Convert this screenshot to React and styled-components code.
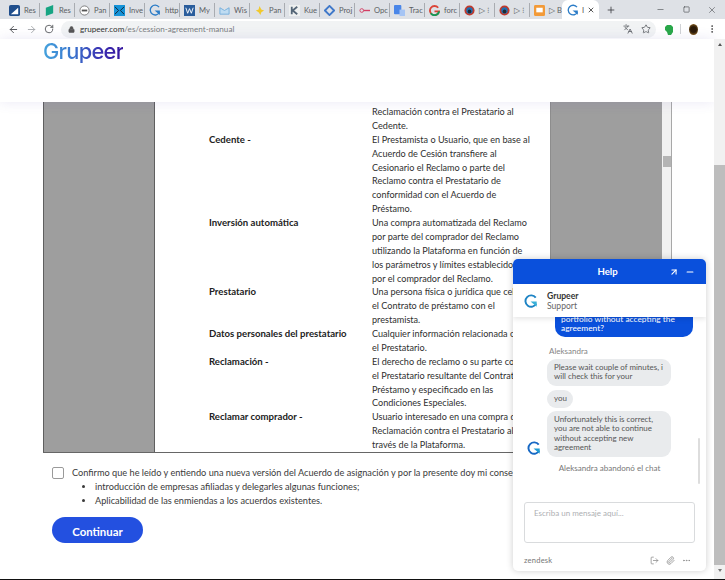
import React from 'react';
import styled, { createGlobalStyle } from 'styled-components';
import { ArrowLeft, ArrowRight, RotateCw, Lock, Star, Plus, X, Minus, Square, EllipsisVertical, Languages, ArrowUpRight, Paperclip, Ellipsis, LogOut } from 'lucide-react';

const Global = createGlobalStyle`
  html, body { margin: 0; padding: 0; }
  body { width: 725px; height: 580px; overflow: hidden; background: #fff; font-family: "Lato", "Open Sans", sans-serif; color: #333; }
  * { box-sizing: border-box; }
`;

const Win = styled.div`
  position: relative; width: 725px; height: 580px; display: flex; flex-direction: column;
  overflow: hidden; border-bottom: 1px solid #111;
`;

/* ---------- browser chrome ---------- */
const TabStrip = styled.div`
  height: 19px; flex: none; display: flex; align-items: stretch; background: #dee1e6; padding-left: 5px;
`;
const Tab = styled.div`
  width: 35px; flex: none; display: flex; align-items: center; gap: 4px; padding-left: 4px;
  border-right: 1px solid ${p => p.$last ? 'transparent' : '#a9acb1'}; margin: 3px 0 2px; overflow: hidden;
  font-size: 7.6px; color: #5c5f63; white-space: nowrap;
`;
const ActiveTab = styled.div`
  width: 37px; flex: none; margin: 0 0 0 -3px; padding: 0 4px 0 5px; display: flex; align-items: center; gap: 3px;
  background: #fff; border-radius: 6px 6px 0 0; font-size: 7.6px; color: #555;
`;
const NewTab = styled.div`
  width: 24px; flex: none; display: flex; align-items: center; justify-content: center; color: #3c4043;
`;
const WinControls = styled.div`
  margin-left: auto; display: flex; align-items: center; color: #3c4043;
`;
const WinBtn = styled.div`
  width: 26px; display: flex; align-items: center; justify-content: center;
`;
const Toolbar = styled.div`
  height: 20px; flex: none; background: #fff; display: flex; align-items: center; padding-left: 4px; color: #5f6368;
`;
const NavBtn = styled.div`
  width: 18px; display: flex; justify-content: center; color: ${p => p.$off ? '#a5a8ac' : '#4a4d51'};
`;
const UrlPill = styled.div`
  width: 595px; height: 17px; margin-left: 3px; flex: none; background: #f1f3f4; border-radius: 9px;
  display: flex; align-items: center; padding: 0 5px 0 7px; font-size: 8.1px; color: #7a7d81; white-space: pre;
`;
const UrlHost = styled.span` color: #333; margin-left: 5px; `;
const UrlEnd = styled.div` margin-left: auto; display: flex; align-items: center; gap: 8px; color: #5f6368; `;
const ToolRight = styled.div`
  flex: 1; display: flex; align-items: center; padding-left: 8px; gap: 7px;
`;
const Divider = styled.div` width: 1px; height: 10px; background: #d0d2d5; `;
const Avatar = styled.div`
  width: 9px; height: 11px; border-radius: 50%; margin-left: 1px;
  background: radial-gradient(circle at 50% 50%, #2a1a08 40%, #b57d27 100%);
`;
const MenuDots = styled(EllipsisVertical)` margin-left: 2px; color: #444; `;

/* ---------- page ---------- */
const Viewport = styled.div`
  flex: 1; min-height: 0; display: flex; align-items: stretch;
`;
const Page = styled.div`
  width: 714px; flex: none; display: flex; flex-direction: column; min-height: 0;
`;
const SiteHeader = styled.header`
  height: 63px; flex: none; background: #fff; padding-left: 43px; overflow: hidden; position: relative; z-index: 2;
  box-shadow: 0 0 12px rgba(90, 80, 180, .13);
`;
const Logo = styled.div`
  display: inline-block; font-family: "Inter", "Lato", sans-serif; font-size: 21.8px; font-weight: 500; letter-spacing: -.7px; line-height: 24px;
  background: linear-gradient(90deg, #45a3dd 0%, #3a78cf 35%, #3a2bb0 75%, #35159e 100%);
  -webkit-background-clip: text; background-clip: text; color: transparent;
`;
const Agreement = styled.div`
  margin-left: 43px; width: 629px; height: 351px; flex: none; display: grid; grid-template-columns: 112px 395px 112px 10px;
  border-bottom: 1px solid #666; overflow: hidden;
`;
const GreyCol = styled.div`
  background: #9e9e9e; border-left: 1px solid ${p => p.$dark ? '#5f5f5f' : '#8d8d8d'}; border-right: 1px solid ${p => p.$end ? 'transparent' : '#5f5f5f'};
`;
const Terms = styled.div`
  padding: 3px 0 0 54px; font-size: 9.1px; line-height: 13.87px; color: #2f2f2f; white-space: nowrap;
`;
const TermRow = styled.div`
  display: grid; grid-template-columns: 163px 1fr;
`;
const Term = styled.div` font-weight: 700; font-size: 9.6px; color: #222; `;
const InnerBar = styled.div`
  background: #f1f1f1; border-right: 1px solid #a8a8a8; padding: 54px 0 0 1px;
`;
const InnerThumb = styled.div` width: 8px; height: 11px; background: #b4b4b4; `;
const Consent = styled.div`
  padding: 13px 0 0 52px; font-size: 9.2px; line-height: 14px; color: #3a3a3a; white-space: nowrap;
`;
const CheckRow = styled.div` display: flex; align-items: center; gap: 8px; height: 14px; `;
const CheckBox = styled.div` width: 12px; height: 12px; border: 1px solid #9a9a9a; border-radius: 2px; background: #fff; `;
const Bullets = styled.ul`
  margin: 0; padding: 0 0 0 43px; 
  li { padding-left: 0; line-height: 14px; }
`;
const Primary = styled.button`
  display: block; margin-top: 9px; width: 91px; height: 26px; border: 0; border-radius: 13px; background: #2350e0;
  color: #fff; font: 700 11.4px "Lato", sans-serif; padding: 2px 0 0;
`;
const PageBar = styled.div`
  flex: 1; background: #f1f1f1; display: flex; flex-direction: column; align-items: center; position: relative; z-index: 3;
  padding-top: 4px;
`;
const ArrowUp = styled.div`
  width: 0; height: 0; border: 2.5px solid transparent; border-top: 0; border-bottom: 3px solid #555;
`;
const ArrowDown = styled.div`
  width: 0; height: 0; border: 2.5px solid transparent; border-bottom: 0; border-top: 3px solid #777;
`;
const PageThumb = styled.div`
  width: 100%; height: 400px; margin: 119px 0 4px; background: #bdbdbd;
`;

/* ---------- chat ---------- */
const Chat = styled.aside`
  position: absolute; left: 513px; top: 259px; width: 193px; height: 312px; background: #fff; border-radius: 5px;
  box-shadow: 0 0 7px rgba(0, 0, 0, .2); display: flex; flex-direction: column; overflow: hidden; z-index: 5;
`;
const ChatHead = styled.div`
  height: 25px; flex: none; background: #0a50dc; color: #fff; display: grid; grid-template-columns: 1fr auto; align-items: center;
  font-size: 9.6px; font-weight: 700; padding: 0 11px 0 0;
`;
const ChatTitle = styled.div` text-align: center; padding-left: 33px; `;
const ChatActions = styled.div` display: flex; align-items: center; gap: 6px; `;
const Agent = styled.div`
  height: 33px; flex: none; display: flex; align-items: center; gap: 9px; padding-left: 11px; background: #fff; position: relative; z-index: 1;
  box-shadow: 0 2px 5px rgba(0, 0, 0, .1);
`;
const AgentText = styled.div` font-size: 8.6px; line-height: 10px; color: #666; `;
const AgentName = styled.div` font-weight: 700; color: #333; `;
const Messages = styled.div`
  height: 185px; flex: none; display: flex; flex-direction: column; justify-content: flex-end; overflow: hidden; position: relative;
  padding: 0 0 28px 34px; font-size: 7.95px; line-height: 9.2px; color: #555; white-space: nowrap;
`;
const Mine = styled.div`
  flex: none; align-self: flex-end; width: 138px; margin-right: 13px; padding: 0 6px 3px 6px; background: #0a50dc; color: #fff;
  border-radius: 0 0 10px 10px; font-size: 8.4px;
`;
const SenderName = styled.div` flex: none; margin: 9px 0 3px 2px; color: #858585; font-size: 8px; line-height: 10px; `;
const Bubble = styled.div`
  flex: none; align-self: flex-start; width: ${p => p.$w}px; padding: 4px 7px 5px; margin-bottom: ${p => p.$gap || 3}px; background: #e9ebed; border-radius: 9px; color: #555;
`;
const AvatarMark = styled.div` position: absolute; left: 14px; bottom: 47px; line-height: 0; `;
const System = styled.div` flex: none; text-align: center; margin: 2px 0 0 -34px; line-height: 12px; color: #777; font-size: 8.05px; `;
const ChatThumb = styled.div`
  position: absolute; right: 6px; bottom: 18px; width: 2px; height: 46px; background: #ddd; border-radius: 1px;
`;
const Composer = styled.div`
  height: 41px; flex: none; margin: 0 11px; padding: 5px 9px; border: 1px solid #d9dbdd; border-radius: 3px; font-size: 8px; line-height: 11px; color: #aeb0b3;
`;
const ChatFoot = styled.div`
  flex: 1; display: flex; align-items: center; justify-content: space-between; padding: 6px 15px 0 11px; font-size: 7.6px; color: #777; letter-spacing: .2px;
`;
const FootIcons = styled.div` display: flex; align-items: center; gap: 7px; color: #8a8a8a; `;

/* ---------- drawings ---------- */
const GMark = ({ size = 14, stroke = 2.2, a = '#1d83c4', b = '#38b0d8' }) => (
  <svg width={size} height={size} viewBox="0 0 16 16" fill="none">
    <path d="M13.4 4.2A6.5 6.5 0 1 0 14 11" stroke={a} strokeWidth={stroke} />
    <path d="M7.5 8.6H14.5V14.5Z" fill={b} />
  </svg>
);

const Fav = ({ kind }) => {
  const s = { width: 11, height: 11, viewBox: '0 0 12 12', style: { flex: 'none' } };
  switch (kind) {
    case 'res1': return <svg {...s}><rect width="12" height="12" rx="2" fill="#1f4e8c" /><path d="M2 10 10 3v7z" fill="#fff" /></svg>;
    case 'res2': return <svg {...s}><path d="M2 3 10 0v9l-8 3z" fill="#17a583" /></svg>;
    case 'pan': return <svg {...s}><circle cx="6" cy="6" r="5" fill="#fff" stroke="#777" /><path d="M3 6h6" stroke="#555" strokeWidth="2" /></svg>;
    case 'inv': return <svg {...s}><rect width="12" height="12" fill="#1593d8" /><path d="M1 2 5 6 1 10M11 2 7 6l4 4" stroke="#123" fill="none" /></svg>;
    case 'g': return <GMark size={12} stroke={1.8} a="#2b7cc7" b="#2b7cc7" />;
    case 'my': return <svg {...s}><rect width="12" height="12" fill="#2a5d9c" /><path d="m2 3 2 6 2-5 2 5 2-6" stroke="#fff" fill="none" /></svg>;
    case 'wis': return <svg {...s}><path d="M1 3 6 6l5-3v7H1z" fill="#bfdcf2" stroke="#74aedb" /></svg>;
    case 'star': return <svg {...s}><path d="M6 1 8 5l3 1-3 2-1 3-2-3-3-2 3-1z" fill="#f1c92c" /></svg>;
    case 'kue': return <svg {...s}><rect width="12" height="12" fill="#eef0f0" /><path d="M3 2v8M9 2 4 6l5 4" stroke="#567" strokeWidth="2" fill="none" /></svg>;
    case 'proj': return <svg {...s}><path d="M6 1 11 6 6 11 1 6z" fill="none" stroke="#3f78c9" strokeWidth="2" /></svg>;
    case 'opc': return <svg {...s}><circle cx="3" cy="6" r="2" fill="none" stroke="#d33d63" /><path d="M5 6h7" stroke="#d33d63" strokeWidth="1.5" /></svg>;
    case 'trac': return <svg {...s}><rect width="8" height="10" rx="1" fill="#4a86e8" /><rect x="6" y="5" width="6" height="7" fill="#a5c4f4" /></svg>;
    case 'goog': return <svg {...s}><path d="M10 3A5 5 0 1 0 11 7H6" fill="none" stroke="#db4437" strokeWidth="2" /><path d="M11 7A5 5 0 0 1 2 9" fill="none" stroke="#0f9d58" strokeWidth="2" /></svg>;
    case 'ball': return <svg {...s}><circle cx="6" cy="6" r="5.5" fill="#c0392b" /><circle cx="6" cy="6" r="3.5" fill="#1f6fb3" /><circle cx="6" cy="7" r="2" fill="#1d2a33" /></svg>;
    case 'msg': return <svg {...s}><rect width="12" height="12" rx="1.5" fill="#f29a38" /><rect x="2.5" y="3" width="7" height="5" fill="#fff" /></svg>;
    default: return null;
  }
};

const tabs = [
  ['res1', 'Res'], ['res2', 'Res'], ['pan', 'Pan'], ['inv', 'Inve'], ['g', 'http'], ['my', 'My'], ['wis', 'Wis'], ['star', 'Pan'],
  ['kue', 'Kue'], ['proj', 'Proj'], ['opc', 'Opc'], ['trac', 'Trac'], ['goog', 'forc'], ['ball', '▷ ⁝'], ['ball', '▷ ⁝'], ['msg', '▷ B'],
];

const rows = [
  ['', ['Reclamación contra el Prestatario al', 'Cedente.']],
  ['Cedente -', ['El Prestamista o Usuario, que en base al', 'Acuerdo de Cesión transfiere al', 'Cesionario el Reclamo o parte del', 'Reclamo contra el Prestatario de', 'conformidad con el Acuerdo de', 'Préstamo.']],
  ['Inversión automática', ['Una compra automatizada del Reclamo', 'por parte del comprador del Reclamo', 'utilizando la Plataforma en función de', 'los parámetros y límites establecidos', 'por el comprador del Reclamo.']],
  ['Prestatario', ['Una persona física o jurídica que celebra', 'el Contrato de préstamo con el', 'prestamista.']],
  ['Datos personales del prestatario', ['Cualquier información relacionada con', 'el Prestatario.']],
  ['Reclamación -', ['El derecho de reclamo o su parte contra', 'el Prestatario resultante del Contrato de', 'Préstamo y especificado en las', 'Condiciones Especiales.']],
  ['Reclamar comprador -', ['Usuario interesado en una compra de', 'Reclamación contra el Prestatario al', 'través de la Plataforma.']],
];

export default function App() {
  return (
    <Win>
      <Global />
      <TabStrip>
        {tabs.map(([k, l], i) => (
          <Tab key={i} $last={i === tabs.length - 1}><Fav kind={k} />{l}</Tab>
        ))}
        <ActiveTab><GMark size={12} stroke={1.8} a="#2b7cc7" b="#2b7cc7" />I<X size={8} color="#333" strokeWidth={2.5} /></ActiveTab>
        <NewTab><Plus size={10} strokeWidth={2} /></NewTab>
        <WinControls>
          <WinBtn><Minus size={9} strokeWidth={1.5} /></WinBtn>
          <WinBtn><Square size={7} strokeWidth={2} /></WinBtn>
          <WinBtn><X size={10} strokeWidth={1.3} /></WinBtn>
        </WinControls>
      </TabStrip>
      <Toolbar>
        <NavBtn><ArrowLeft size={11} strokeWidth={2} /></NavBtn>
        <NavBtn $off><ArrowRight size={11} strokeWidth={2} /></NavBtn>
        <NavBtn><RotateCw size={10} strokeWidth={2} /></NavBtn>
        <UrlPill>
          <Lock size={7} fill="#555" color="#555" strokeWidth={2} />
          <UrlHost>grupeer.com</UrlHost>/es/cession-agreement-manual
          <UrlEnd><Languages size={10} /><Star size={10} /></UrlEnd>
        </UrlPill>
        <ToolRight>
          <svg width="9" height="11" viewBox="0 0 9 11"><path d="M1 3 3 1h4l2 2v5L7 11H4L3 8 1 6z" fill="#2aa84a" /></svg>
          <Divider />
          <Avatar />
          <MenuDots size={10} />
        </ToolRight>
      </Toolbar>
      <Viewport>
        <Page>
          <SiteHeader><Logo>Grupeer</Logo></SiteHeader>
          <Agreement>
            <GreyCol $dark />
            <Terms>
              {rows.map(([t, lines], i) => (
                <TermRow key={i}>
                  <Term>{t}</Term>
                  <div>{lines.map((l, j) => <div key={j}>{l}</div>)}</div>
                </TermRow>
              ))}
            </Terms>
            <GreyCol $end />
            <InnerBar><InnerThumb /></InnerBar>
          </Agreement>
          <Consent>
            <CheckRow>
              <CheckBox />
              Confirmo que he leído y entiendo una nueva versión del Acuerdo de asignación y por la presente doy mi consentimiento
            </CheckRow>
            <Bullets>
              <li>introducción de empresas afiliadas y delegarles algunas funciones;</li>
              <li>Aplicabilidad de las enmiendas a los acuerdos existentes.</li>
            </Bullets>
            <Primary>Continuar</Primary>
          </Consent>
        </Page>
        <PageBar>
          <ArrowUp />
          <PageThumb />
          <ArrowDown />
        </PageBar>
      </Viewport>
      <Chat>
        <ChatHead>
          <ChatTitle>Help</ChatTitle>
          <ChatActions><ArrowUpRight size={10} strokeWidth={2.6} /><Minus size={10} strokeWidth={2.6} /></ChatActions>
        </ChatHead>
        <Agent>
          <GMark size={14} />
          <AgentText><AgentName>Grupeer</AgentName>Support</AgentText>
        </Agent>
        <Messages>
          <Mine>portfolio without accepting the<br />agreement?</Mine>
          <SenderName>Aleksandra</SenderName>
          <Bubble $w={124} $gap={4}>Please wait couple of minutes, i<br />will check this for your</Bubble>
          <Bubble $w={26}>you</Bubble>
          <Bubble $w={124}>Unfortunately this is correct,<br />you are not able to continue<br />without accepting new<br />agreement</Bubble>
          <AvatarMark><GMark size={14} a="#1768c4" b="#1e9bd4" /></AvatarMark>
          <System>Aleksandra abandonó el chat</System>
          <ChatThumb />
        </Messages>
        <Composer>Escriba un mensaje aquí...</Composer>
        <ChatFoot>
          zendesk
          <FootIcons><LogOut size={9} /><Paperclip size={9} /><Ellipsis size={9} /></FootIcons>
        </ChatFoot>
      </Chat>
    </Win>
  );
}
